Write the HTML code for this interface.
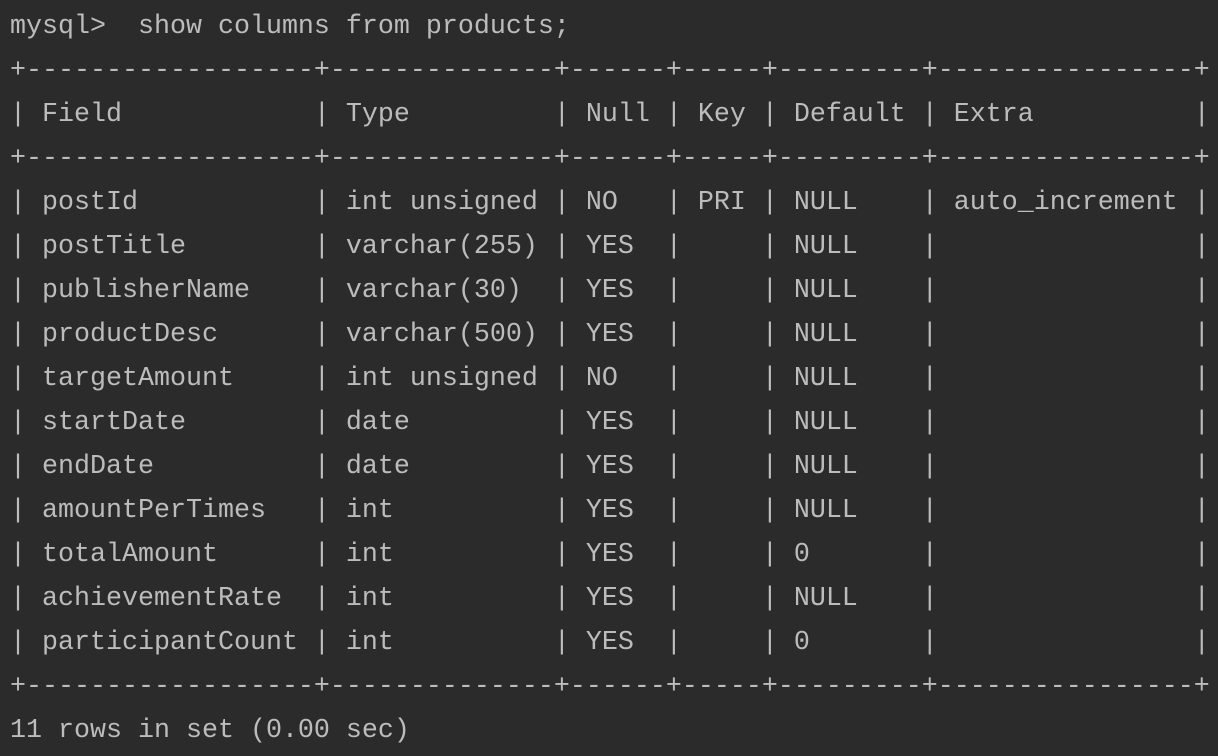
<!DOCTYPE html>
<html><head><style>
html,body{margin:0;padding:0;background:#2b2b2b;width:1218px;height:756px;overflow:hidden}
pre{margin:0;position:absolute;left:10px;top:5px;font-family:"Liberation Mono",monospace;font-size:26.67px;line-height:44px;color:#bcbcbc;white-space:pre}
</style></head><body>
<pre>mysql>  show columns from products;
+------------------+--------------+------+-----+---------+----------------+
| Field            | Type         | Null | Key | Default | Extra          |
+------------------+--------------+------+-----+---------+----------------+
| postId           | int unsigned | NO   | PRI | NULL    | auto_increment |
| postTitle        | varchar(255) | YES  |     | NULL    |                |
| publisherName    | varchar(30)  | YES  |     | NULL    |                |
| productDesc      | varchar(500) | YES  |     | NULL    |                |
| targetAmount     | int unsigned | NO   |     | NULL    |                |
| startDate        | date         | YES  |     | NULL    |                |
| endDate          | date         | YES  |     | NULL    |                |
| amountPerTimes   | int          | YES  |     | NULL    |                |
| totalAmount      | int          | YES  |     | 0       |                |
| achievementRate  | int          | YES  |     | NULL    |                |
| participantCount | int          | YES  |     | 0       |                |
+------------------+--------------+------+-----+---------+----------------+
11 rows in set (0.00 sec)</pre>
</body></html>
